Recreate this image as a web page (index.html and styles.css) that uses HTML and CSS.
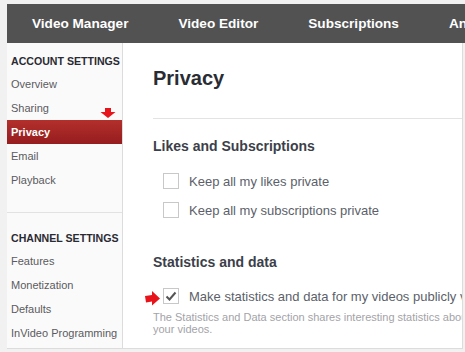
FILE: index.html
```html
<!DOCTYPE html>
<html lang="en">
<head>
    <meta charset="UTF-8">
    <meta name="viewport" content="width=device-width, initial-scale=1.0">
    <title>Privacy - Settings</title>
    <link rel="stylesheet" href="styles.css">
</head>
<body>

    <div class="page">
        <nav class="topbar">
            <a href="#" class="top-link">Video Manager</a>
            <a href="#" class="top-link">Video Editor</a>
            <a href="#" class="top-link">Subscriptions</a>
            <a href="#" class="top-link">Analytics</a>
        </nav>

        <div class="layout">
            <aside class="sidebar">
                <div class="side-group">
                    <h3 class="side-title">Account Settings</h3>
                    <a href="#" class="side-link">Overview</a>
                    <a href="#" class="side-link marked">
                        Sharing
                        <svg class="arrow-down" width="16" height="10" viewBox="0 0 16 10">
                            <path d="M5 0h6v4h4.5l-7.5 6-7.5-6h4.5z" fill="#e8141b"/>
                        </svg>
                    </a>
                    <a href="#" class="side-link active">Privacy</a>
                    <a href="#" class="side-link">Email</a>
                    <a href="#" class="side-link">Playback</a>
                </div>
                <div class="side-group second">
                    <h3 class="side-title">Channel Settings</h3>
                    <a href="#" class="side-link">Features</a>
                    <a href="#" class="side-link">Monetization</a>
                    <a href="#" class="side-link">Defaults</a>
                    <a href="#" class="side-link">InVideo Programming</a>
                </div>
            </aside>

            <main class="content">
                <h1 class="page-title">Privacy</h1>

                <section class="block">
                    <h2 class="block-title">Likes and Subscriptions</h2>
                    <label class="option">
                        <span class="check"></span>
                        Keep all my likes private
                    </label>
                    <label class="option">
                        <span class="check"></span>
                        Keep all my subscriptions private
                    </label>
                </section>

                <section class="block stats">
                    <h2 class="block-title">Statistics and data</h2>
                    <label class="option marked">
                        <svg class="arrow-right" width="15" height="15" viewBox="0 0 15 15">
                            <path d="M0 5l7 -1v-4l8 7.5-8 7v-4l-6 1z" fill="#e8141b"/>
                        </svg>
                        <span class="check checked">
                            <svg width="14" height="14" viewBox="0 0 14 14">
                                <path d="M2.5 7.5l3 3 6-7" fill="none" stroke="#555" stroke-width="2"/>
                            </svg>
                        </span>
                        Make statistics and data for my videos publicly visible
                    </label>
                    <p class="hint">The Statistics and Data section shares interesting statistics about your videos.</p>
                </section>
            </main>
        </div>
    </div>

</body>
</html>
```

FILE: styles.css
```css
/* General Styling */
body {
    font-family: 'Liberation Sans', Arial, sans-serif;
    margin: 0;
    padding: 0;
    background-color: #f1f1f1;
    overflow: hidden;
}

.page {
    margin: 4px 0 0 7px;
    width: 458px;
    overflow: hidden;
}

/* Top navigation */
.topbar {
    display: flex;
    height: 39px;
    align-items: center;
    background-color: #525252;
    white-space: nowrap;
}

.top-link {
    color: white;
    text-decoration: none;
    font-size: 13.6px;
    font-weight: bold;
    padding: 0 25px;
}

/* Sidebar + content */
.layout {
    display: flex;
    width: 455px;
    height: 305px;
    background: white;
    border-right: 1px solid #dcdcdc;
    border-bottom: 1px solid #dcdcdc;
}

.sidebar {
    width: 115px;
    flex-shrink: 0;
    background: #fafafa;
    border-right: 1px solid #dcdcdc;
}

.side-group {
    padding: 10px 0 20px;
    border-bottom: 1px solid #e2e2e2;
}

.side-group.second {
    padding: 17px 0 0;
    border-bottom: none;
}

.side-title {
    margin: 0 0 3px;
    padding-left: 4px;
    font-size: 10.6px;
    line-height: 16px;
    color: #2a2a33;
    text-transform: uppercase;
    white-space: nowrap;
    overflow: hidden;
}

.side-link {
    display: block;
    position: relative;
    height: 24px;
    line-height: 24px;
    padding-left: 4px;
    font-size: 11px;
    color: #5a5a60;
    text-decoration: none;
    white-space: nowrap;
}

.side-link.active {
    color: white;
    font-weight: bold;
    background: linear-gradient(#b3302c, #961c1e);
}

.arrow-down {
    position: absolute;
    left: 93px;
    top: 12px;
}

/* Main content */
.content {
    flex: 1;
    padding: 23px 0 0 30px;
    overflow: hidden;
    white-space: nowrap;
}

.page-title {
    margin: 0;
    font-size: 20px;
    line-height: 24px;
    color: #2a2c33;
}

.block {
    margin-top: 28px;
    border-top: 1px solid #e3e3e3;
    padding-top: 18px;
}

.block.stats {
    border-top: none;
    margin-top: 0;
    padding-top: 25px;
}

.block-title {
    margin: 0 0 15px;
    font-size: 14px;
    line-height: 18px;
    color: #3c3f4a;
}

.block.stats .block-title {
    margin-bottom: 14px;
}

.option {
    display: flex;
    align-items: center;
    position: relative;
    height: 22px;
    margin: 0 0 7px 10px;
    font-size: 13px;
    color: #5c5f6a;
}

.check {
    display: flex;
    align-items: center;
    justify-content: center;
    width: 14px;
    height: 14px;
    margin-right: 10px;
    border: 1px solid #c8c8c8;
    background: white;
}

.option.marked {
    margin-bottom: 4px;
}

.arrow-right {
    position: absolute;
    left: -18px;
    top: 6px;
}

.hint {
    margin: 0;
    width: 338px;
    white-space: normal;
    font-size: 11px;
    line-height: 12px;
    color: #a3a3a8;
}
```
